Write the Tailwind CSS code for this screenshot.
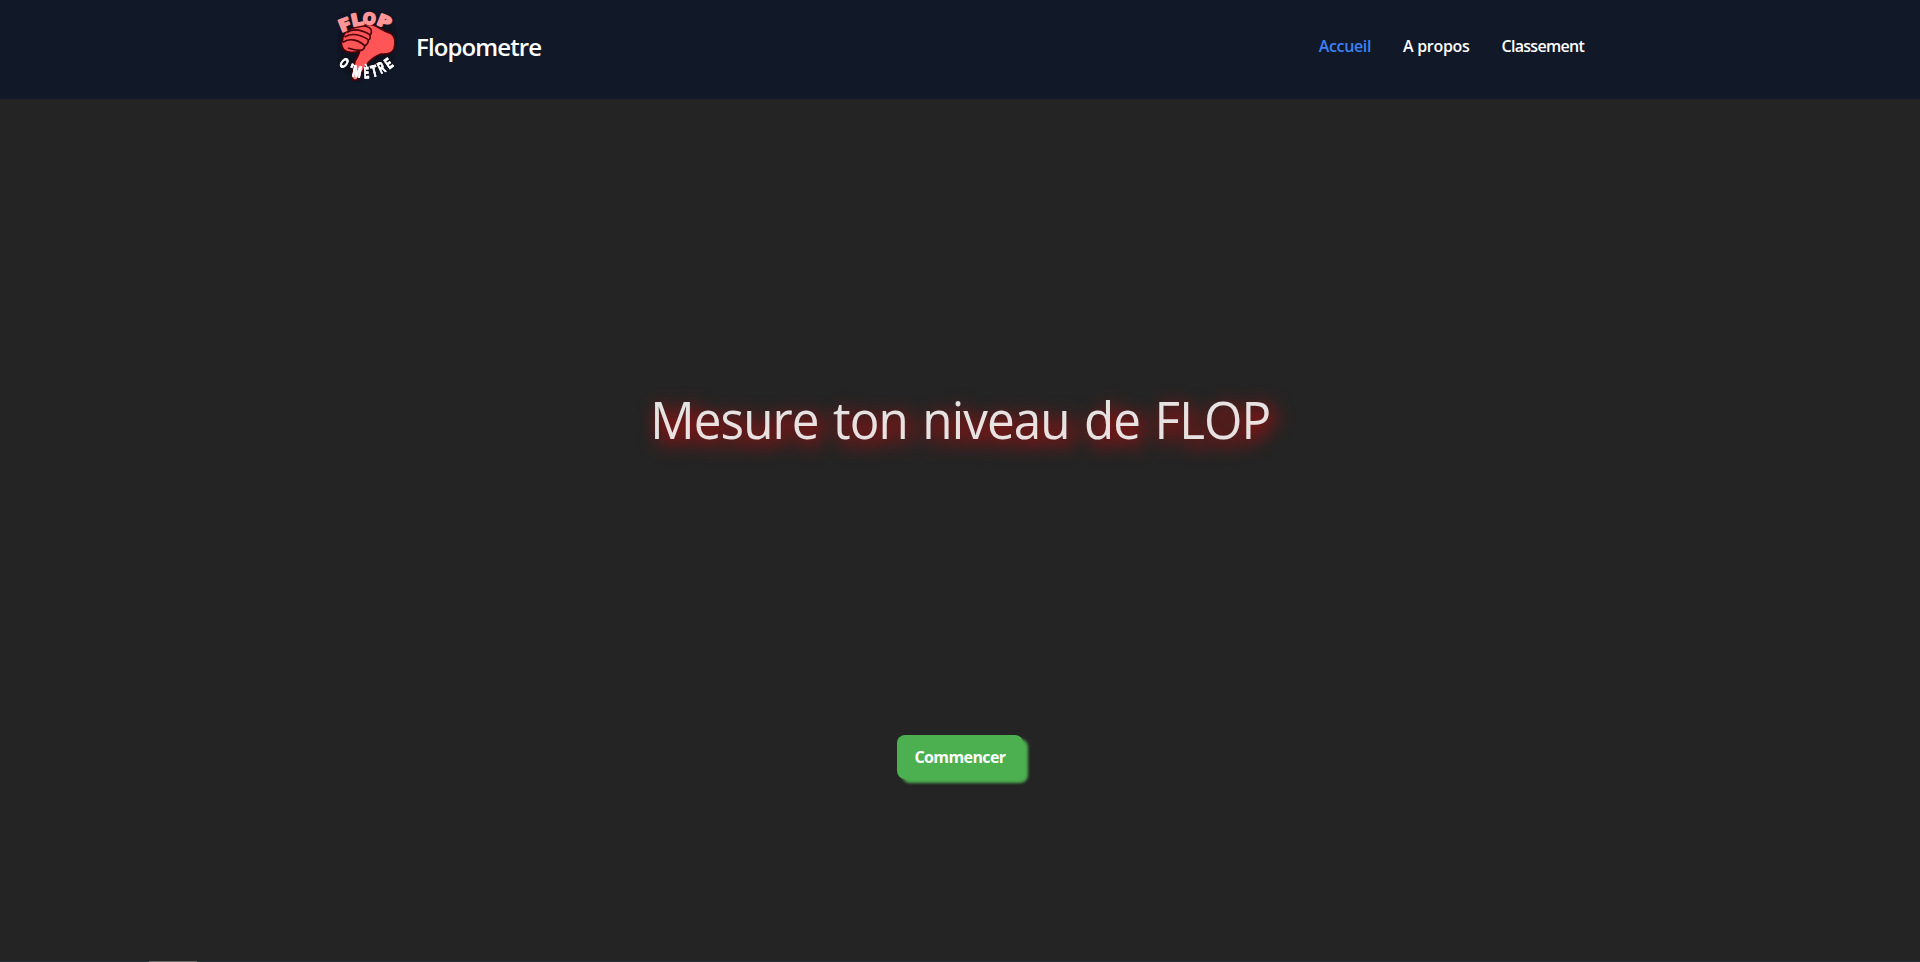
<!DOCTYPE html>
<html lang="fr">
<head>
<meta charset="utf-8">
<title>Flopometre</title>
<script src="https://cdn.jsdelivr.net/npm/@tailwindcss/browser@4"></script>
</head>
<body class="h-screen overflow-hidden bg-[#242424] font-['Open_Sans','Noto_Sans',sans-serif] flex flex-col">
<header class="h-[99px] shrink-0 bg-[#111827]">
  <div class="mx-auto flex h-[94px] w-[1280px] items-center justify-between px-4">
    <a class="flex items-center gap-4">
      <svg class="mb-1.5 h-20 w-16" viewBox="33 12 192 240">
        <defs>
          <filter id="soft" x="-20%" y="-20%" width="140%" height="140%"><feGaussianBlur stdDeviation="5"/></filter>
          <filter id="glow" x="-20%" y="-20%" width="140%" height="140%"><feDropShadow dx="0" dy="0" stdDeviation="2" flood-color="#fff" flood-opacity=".65"/></filter>
          <linearGradient id="tip" x1="0" y1="0" x2="0" y2="1"><stop offset=".7" stop-color="#ff5557"/><stop offset="1" stop-color="#ff9594"/></linearGradient>
        </defs>
        <path d="M45 50 Q110 15 200 50 L212 120 L200 190 L95 245 L42 195Z" fill="#0b0d18" opacity=".5" filter="url(#soft)"/>
        <path d="M64 95 C72 84 98 80 119 77 C131 69 151 75 163 84 C177 93 190 98 199 101 C210 111 213 128 207 147 C201 160 182 163 168 162 C151 168 139 177 128 190 L101 232 C96 245 80 243 80 228 L90 184 C96 174 103 163 104 153 C84 160 57 157 53 143 C48 135 49 126 53 120 C52 110 57 102 64 95Z" fill="url(#tip)" stroke="#4b0008" stroke-width="5" stroke-linejoin="round"/>
        <g fill="none" stroke="#4b0008" stroke-width="5" stroke-linecap="round" stroke-linejoin="round">
          <path d="M119 78 Q139 82 139 93 Q140 103 134 104 Q139 117 130 120 Q130 132 120 137"/>
          <path d="M68 96 C88 84 114 92 135 104"/>
          <path d="M60 110 C83 97 108 105 130 119"/>
          <path d="M56 126 C74 113 102 120 119 137 Q119 148 108 151 Q88 151 71 145"/>
        </g>
        <g font-family="Open Sans, sans-serif" font-weight="700" text-anchor="middle" fill="#ff9596" stroke="#ff9596" stroke-width="6" stroke-linejoin="round">
          <text transform="translate(59 74) rotate(-22) scale(1.25 1)" y="18" font-size="50">F</text>
          <text transform="translate(96 58) rotate(-12) scale(1.25 1)" y="18" font-size="50">L</text>
          <text transform="translate(133 55) rotate(8) scale(1.05 1)" y="17" font-size="46">O</text>
          <text transform="translate(178 64) rotate(22) scale(1.35 1)" y="17" font-size="48">P</text>
        </g>
        <g font-family="Liberation Sans, sans-serif" font-weight="700" text-anchor="middle" fill="#fff" stroke="#fff" stroke-width="2.5" filter="url(#glow)">
          <text transform="translate(58 189) rotate(38) scale(.62 1)" y="15" font-size="43">O</text>
          <text transform="translate(78 204) rotate(25) scale(.9 1)" y="16" font-size="42">'</text>
          <text transform="translate(96 214) rotate(10) scale(.66 1)" y="17" font-size="48">M</text>
          <text transform="translate(124 217) rotate(-3) scale(.48 1)" y="17" font-size="47">È</text>
          <text transform="translate(147 212) rotate(-14) scale(.62 1)" y="17" font-size="48">T</text>
          <text transform="translate(169 203) rotate(-26) scale(.53 1)" y="16" font-size="47">R</text>
          <text transform="translate(190 190) rotate(-36) scale(.58 1)" y="16" font-size="45">E</text>
        </g>
      </svg>
      <span class="text-2xl font-semibold text-white tracking-[-0.9px]">Flopometre</span>
    </a>
    <nav class="flex items-center gap-8 pb-0.5 text-base font-semibold text-white tracking-[-0.3px]">
      <a class="text-[#3b82f6] tracking-[-0.35px]">Accueil</a>
      <a>A propos</a>
      <a class="tracking-[-0.72px]">Classement</a>
    </nav>
  </div>
</header>
<main class="flex flex-1 flex-col items-center">
  <h1 class="mt-[282px] h-[77px] scale-x-[.965] whitespace-nowrap text-[51.2px] leading-[77px] tracking-[-0.96px] [word-spacing:2.6px] text-white/87 [text-shadow:5px_5px_20px_red]">Mesure ton niveau de FLOP</h1>
  <button class="mt-[277px] h-11 w-[126px] rounded-lg bg-[#4caf50] pb-px text-base font-bold tracking-[-0.6px] text-white shadow-[5px_4px_3px_#4caf50]">Commencer</button>
</main>
<footer class="h-px bg-[#26343a] pl-[149px]"><div class="h-px w-12 bg-[#686868]"></div></footer>
</body>
</html>
